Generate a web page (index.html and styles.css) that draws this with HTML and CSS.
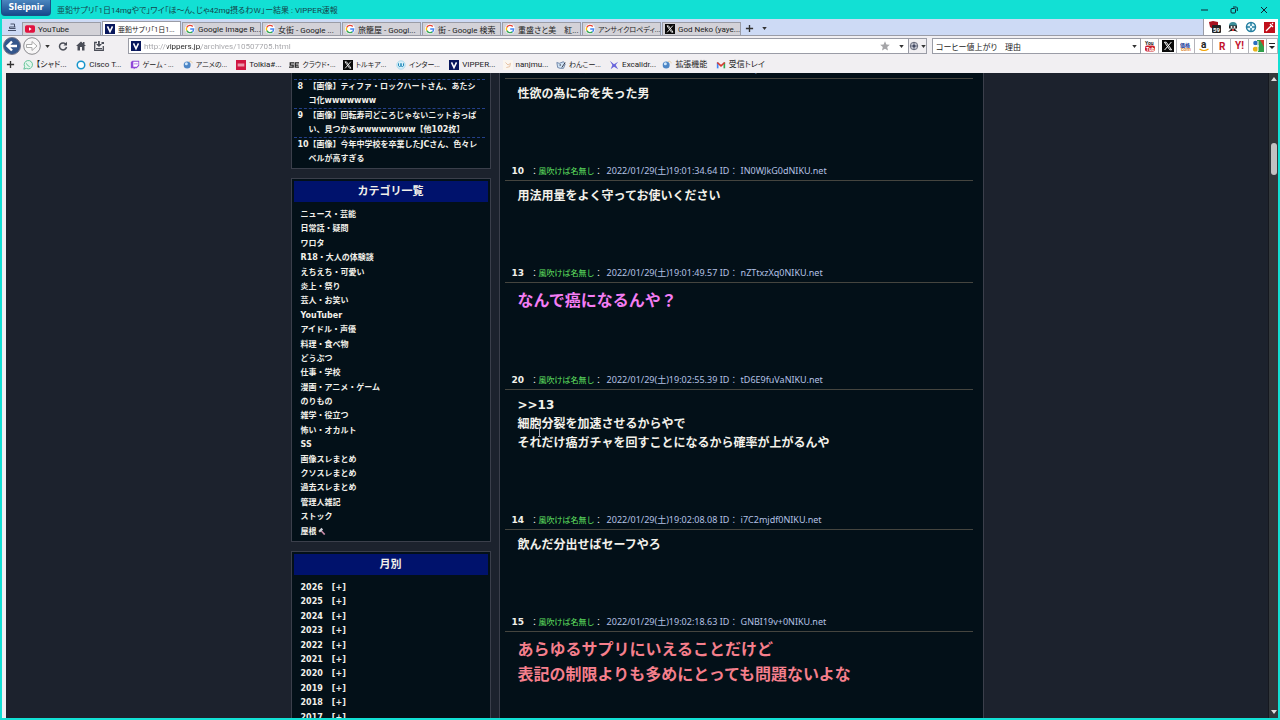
FILE: index.html
```html
<!DOCTYPE html>
<html lang="ja">
<head>
    <meta charset="UTF-8">
    <meta name="viewport" content="width=device-width, initial-scale=1.0">
    <title>亜鉛サプリ「1日14mgやで」 : VIPPER速報</title>
    <link rel="stylesheet" href="styles.css">
</head>
<body>

    <!-- Shared icons -->
    <svg class="sprite" aria-hidden="true">
        <symbol id="google" viewBox="0 0 18 18">
            <circle cx="9" cy="9" r="9" fill="#fff"/>
            <path d="M14 4.6A6.6 6.6 0 0 0 3.2 6" fill="none" stroke="#ea4335" stroke-width="2.4"/>
            <path d="M3.2 6a6.6 6.6 0 0 0 0 6" fill="none" stroke="#fbbc05" stroke-width="2.4"/>
            <path d="M3.2 12a6.6 6.6 0 0 0 10 2.2" fill="none" stroke="#34a853" stroke-width="2.4"/>
            <path d="M13.2 14.2A6.6 6.6 0 0 0 15.6 9H9.4" fill="none" stroke="#4285f4" stroke-width="2.4"/>
        </symbol>
        <symbol id="vip" viewBox="0 0 12 12">
            <path d="M0 0h12v12H0z" fill="#08175c"/>
            <path d="M3 2.8l3 6.4 3-6.4" fill="none" stroke="#fff" stroke-width="1.8"/>
        </symbol>
        <symbol id="x" viewBox="0 0 12 12">
            <path d="M0 0h12v12H0z" fill="#0a0a0a"/>
            <path d="M2.4 2.2h1.8l5.4 7.6H7.8z" fill="none" stroke="#fff"/>
            <path d="M9.4 2L2.6 10" stroke="#fff"/>
        </symbol>
        <symbol id="globe" viewBox="0 0 12 12">
            <circle cx="5" cy="6" r="4.2" fill="#4d86c6"/>
            <circle cx="4" cy="4.6" r="1.8" fill="#cfe6fa"/>
            <path d="M7 2c2-1.500 4 0 4 2" fill="none" stroke="#e6c99a"/>
        </symbol>
        <symbol id="down" viewBox="0 0 6 4">
            <path d="M0 0h6L3 4z" fill="currentColor"/>
        </symbol>
        <symbol id="plus" viewBox="0 0 10 10">
            <path d="M5 1v8M1 5h8" stroke="currentColor" stroke-width="1.500"/>
        </symbol>
    </svg>

    <!-- Title Bar -->
    <header class="titlebar">
        <button class="brand">Sleipnir</button>
        <span class="window-title">亜鉛サプリ「1日14mgやで」ワイ「ほ～ん、じゃ42mg摂るわｗ」ー結果 : VIPPER速報</span>
        <div class="window-buttons">
            <button aria-label="最小化"><svg viewBox="0 0 8 8"><path d="M1 4h7" stroke="#123"/></svg></button>
            <button aria-label="元に戻す"><svg viewBox="0 0 8 8" fill="none" stroke="#123"><rect x="1" y="2.500" width="4.500" height="4.500" rx="1"/><path d="M3 1h3.500l.8.8V5"/></svg></button>
            <button aria-label="閉じる"><svg viewBox="0 0 8 8"><path d="M1 1l6 6M7 1L1 7" stroke="#123"/></svg></button>
        </div>
    </header>

    <div class="window">

        <!-- Tabs -->
        <div class="tabstrip">
            <button class="tab-home" aria-label="タブ一覧"><svg viewBox="0 0 10 10" fill="none" stroke="#46506a"><path d="M3.500 2h4v3M2.500 5h6M1 8.500h8M2.500 5v1.500h6"/></svg></button>
            <nav class="tabs">
                <a class="tab" href="#"><svg class="icon" viewBox="0 0 12 12"><rect y="1.500" width="12" height="9" rx="2" fill="#e2123f"/><path d="M4.800 4v4L8 6z" fill="#fff"/></svg><span>YouTube</span></a>
                <a class="tab active kana" href="#"><svg class="icon"><use href="#vip"/></svg><span>亜鉛サプリ「1日1...</span></a>
                <a class="tab" href="#"><svg class="icon"><use href="#google"/></svg><span>Google Image R...</span></a>
                <a class="tab" href="#"><svg class="icon"><use href="#google"/></svg><span>女街 - Google ...</span></a>
                <a class="tab" href="#"><svg class="icon"><use href="#google"/></svg><span>旅籠屋 - Googl...</span></a>
                <a class="tab" href="#"><svg class="icon"><use href="#google"/></svg><span>街 - Google 検索</span></a>
                <a class="tab" href="#"><svg class="icon"><use href="#google"/></svg><span>重盛さと美　紅...</span></a>
                <a class="tab kana" href="#"><svg class="icon"><use href="#google"/></svg><span>アンサイクロペディ...</span></a>
                <a class="tab" href="#"><svg class="icon"><use href="#x"/></svg><span>God Neko (yaye...</span></a>
            </nav>
            <button class="tab-add" aria-label="新しいタブ"><svg class="small"><use href="#plus"/></svg></button>
            <button class="tab-add" aria-label="タブメニュー"><svg class="caret"><use href="#down"/></svg></button>
            <div class="extensions">
                <svg viewBox="0 0 14 14"><path d="M1 2l4-1 5 1v5L5 9 2 7z" fill="#a8101d"/><rect x="4" y="5" width="9" height="8" rx="1" fill="#222"/><text x="5" y="12" class="badge">59</text></svg>
                <svg viewBox="0 0 14 14"><path d="M3 6a4 4 0 0 1 8 0z" fill="#3b8d98"/><rect x="3" y="5.500" width="8" height="3" fill="#222"/><circle cx="5.500" cy="7" r="1" fill="#fff"/><circle cx="8.500" cy="7" r="1" fill="#fff"/><path d="M2 12l3-3h4l3 3-3-1H5z" fill="#222"/><path d="M6 9h2v2H6z" fill="#d33"/></svg>
                <svg viewBox="0 0 14 14"><circle cx="7" cy="7" r="4.500" fill="#e6f7fb" stroke="#257fa1" stroke-width="1.500"/><path d="M7 3v3M7 8v3M3 7h3M8 7h3" stroke="#257fa1" stroke-width="1.500"/></svg>
                <svg viewBox="0 0 14 14"><path d="M2 2h11v11H2z" fill="#c00f1b"/><path d="M4 11l5-5M8 4l3 3M10 4l1-1" stroke="#fff" stroke-width="1.300"/></svg>
            </div>
        </div>

        <!-- Address Bar -->
        <div class="toolbar">
            <div class="nav-buttons">
                <button aria-label="戻る"><svg class="round" viewBox="0 0 18 18"><circle cx="9" cy="9" r="8.500" fill="#33568c" stroke="#778"/><path d="M14 9H5M9 4.500L4.500 9 9 13.500" fill="none" stroke="#fff" stroke-width="2.400"/></svg></button>
                <button aria-label="進む"><svg class="round" viewBox="0 0 18 18"><circle cx="9" cy="9" r="8.300" fill="#f7f6f7" stroke="#8a8a8e"/><path d="M3.500 7.500H9V4.500L14 9l-5 4.500v-3H3.500z" fill="#fff" stroke="#aaa"/></svg></button>
                <button aria-label="履歴"><svg class="caret"><use href="#down"/></svg></button>
            </div>
            <div class="page-buttons">
                <button aria-label="再読み込み"><svg viewBox="0 0 10 10"><path d="M8 3.500A3.500 3.500 0 1 0 8.500 6" fill="none" stroke="#4a4d57" stroke-width="1.500"/><path d="M9 .8v3.700H5.500z" fill="#4a4d57"/></svg></button>
                <button aria-label="ホーム"><svg viewBox="0 0 10 10"><path d="M5 .5L10 5H8.500v4.500h-2.500V6H4v3.500H1.500V5H0z" fill="#4a4d57"/><path d="M7 1h1.500v2.500H7z" fill="#4a4d57"/></svg></button>
                <button aria-label="保存"><svg viewBox="0 0 10 10"><path d="M3 1.500H.7v7.800h8.600V5" fill="none" stroke="#4a4d57" stroke-width="1.300"/><path d="M4 0h1.800v3H8L5 6 2 3h2z" fill="#4a4d57"/><path d="M7.500 1H10v2H7.500zM2 7h6v1.200H2z" fill="#4a4d57"/></svg></button>
            </div>
            <div class="address">
                <svg class="icon"><use href="#vip"/></svg>
                <input class="url" type="text" aria-label="アドレス" value="http://vippers.jp/archives/10507705.html">
                <button aria-label="お気に入り"><svg class="star" viewBox="0 0 10 10"><path d="M5 .3l1.400 3.200 3.400.3-2.600 2.300.8 3.500L5 7.800 2 9.600l.8-3.500L.2 3.800l3.400-.3z" fill="#a5a5a8"/></svg></button>
                <button aria-label="候補"><svg class="caret"><use href="#down"/></svg></button>
            </div>
            <button class="engine" aria-label="エンジン"><svg class="icon" viewBox="0 0 12 12"><circle cx="6" cy="6" r="4.500" fill="#c9cbd6" stroke="#555a6c"/><path d="M6 1.500v9M1.500 6h9" stroke="#555a6c"/><circle cx="6" cy="6" r="1.800" fill="#444a63"/></svg><svg class="caret"><use href="#down"/></svg></button>
            <div class="search">
                <input type="text" aria-label="検索" value="コーヒー値上がり　理由">
                <button aria-label="検索履歴"><svg class="caret"><use href="#down"/></svg></button>
            </div>
            <div class="engines">
                <button aria-label="YouTube"><svg viewBox="0 0 12 12"><text x="1" y="5" class="logo dark">You</text><rect x="1" y="5.500" width="10" height="6" rx="2" fill="#cc1e2b"/><text x="2" y="10.500" class="logo white">Tub</text></svg></button>
                <button aria-label="X"><svg><use href="#x"/></svg></button>
                <button aria-label="価格.com"><svg viewBox="0 0 12 12"><text x="0" y="7" class="logo blue">価格</text><text x="1" y="11" class="logo orange">com</text></svg></button>
                <button aria-label="Amazon"><svg viewBox="0 0 12 12"><text x="3" y="8" class="letter dark">a</text><path d="M1.500 9q4.500 3 9 0" fill="none" stroke="#f2a100" stroke-width="1.200"/></svg></button>
                <button aria-label="楽天"><svg viewBox="0 0 12 12"><text x="3" y="10" class="letter red">R</text></svg></button>
                <button aria-label="Yahoo"><svg viewBox="0 0 12 12"><text x="1" y="9" class="letter red">Y!</text></svg></button>
                <button aria-label="地図"><svg viewBox="0 0 12 12"><path d="M5 0h7v12H6z" fill="#2f9e4b"/><circle cx="3.500" cy="3" r="2.300" fill="#2a6fc0"/><circle cx="3.500" cy="9" r="2.600" fill="#e8b31a"/><path d="M8 0h4v7z" fill="#d33b2c"/><path d="M1 6h6M6 1v10" stroke="#fff"/></svg></button>
            </div>
            <button class="more" aria-label="その他"><svg viewBox="0 0 6 8"><path d="M0 1.500h6" stroke="#222"/><path d="M0 4h6L3 7z" fill="#222"/></svg></button>
        </div>

        <!-- Bookmarks -->
        <div class="bookmarks">
            <button aria-label="追加"><svg class="small"><use href="#plus"/></svg></button>
            <nav>
                <a href="#"><svg viewBox="0 0 12 12"><path d="M1 11l1-3a5 5 0 1 1 2 2z" fill="#e2f6ec" stroke="#4dbb8a"/><path d="M4 4q1 3 4 4" stroke="#4dbb8a" fill="none"/></svg>【シャド...</a>
                <a href="#"><svg viewBox="0 0 12 12"><circle cx="6" cy="6" r="4.500" fill="#fff" stroke="#1695cc" stroke-width="1.800"/></svg>Cisco T...</a>
                <a class="kana" href="#"><svg viewBox="0 0 12 12"><path d="M1 2.500L3 1h8v6L8 10H6l-1.500 1.500V10H1z" fill="#9147d8"/><path d="M4 2h6v4L8 8H4z" fill="#fff"/><path d="M6 3.500v2M8.300 3.500v2" stroke="#9147d8"/></svg>ゲーム - ...</a>
                <a class="kana" href="#"><svg><use href="#globe"/></svg>アニメの...</a>
                <a href="#"><svg viewBox="0 0 12 12"><path d="M0 0h12v12H0z" fill="#d11642"/><path d="M2 5h8M2 7h8" stroke="#fff"/></svg>Tolkia#...</a>
                <a class="kana" href="#"><svg viewBox="0 0 12 12"><path d="M6 3.500H1.500v2.500H5v2.500H0M12 3.500H7.500v5H12M7.500 6h4" fill="none" stroke="#222" stroke-width="1.500"/></svg>クラウド・...</a>
                <a class="kana" href="#"><svg><use href="#x"/></svg>トルキア...</a>
                <a class="kana" href="#"><svg viewBox="0 0 12 12"><circle cx="6" cy="6" r="5" fill="#d8f0fa" stroke="#a5d6ea"/><path d="M3 4v3q1.500 2 3 0V4v3q1.500 2 3 0V4" fill="none" stroke="#2288b8" stroke-width="1.200"/></svg>インター...</a>
                <a href="#"><svg><use href="#vip"/></svg>VIPPER...</a>
                <a href="#"><svg viewBox="0 0 12 12"><path d="M0 0h12v12H0z" fill="#fbf6ef"/><path d="M3 3l3 3 3-2-1 4-4 1" fill="none" stroke="#e3b998"/></svg>nanjmu...</a>
                <a class="kana" href="#"><svg viewBox="0 0 12 12"><path d="M1 3l3 1 5-2 2 3-2 5H5L2 9z" fill="#cfe1f3" stroke="#6279a0"/><circle cx="5" cy="6" r=".8" fill="#223"/><path d="M7 9l4-6" stroke="#223"/></svg>わんこー...</a>
                <a href="#"><svg viewBox="0 0 12 12"><path d="M1 1l5 4 5-3-3 4 3 5-5-3-4 3 2-5z" fill="#6965db"/></svg>Excalidr...</a>
                <a href="#"><svg><use href="#globe"/></svg>拡張機能</a>
                <a href="#"><svg viewBox="0 0 12 12" fill="none" stroke-width="2"><path d="M2 10V3" stroke="#4285f4"/><path d="M10 10V3" stroke="#34a853"/><path d="M1.500 3L6 7l4.500-4" stroke="#d93a2f"/></svg>受信トレイ</a>
            </nav>
        </div>

        <!-- Web Page -->
        <div class="viewport">
            <div class="page">
                <div class="layout">

                    <aside class="sidebar">
                        <section class="box">
                            <ol class="ranking">
                                <li><b>8</b><a href="#">【画像】ティファ・ロックハートさん、あたシコ化wwwwwww</a></li>
                                <li><b>9</b><a href="#">【画像】回転寿司どころじゃないニットおっぱい、見つかるwwwwwwww【他102枚】</a></li>
                                <li><b>10</b><a href="#">【画像】今年中学校を卒業したJCさん、色々レベルが高すぎる</a></li>
                            </ol>
                        </section>

                        <section class="box">
                            <h2>カテゴリ一覧</h2>
                            <ul class="links">
                                <li><a href="#">ニュース・芸能</a></li>
                                <li><a href="#">日常話・疑問</a></li>
                                <li><a href="#">ワロタ</a></li>
                                <li><a href="#">R18・大人の体験談</a></li>
                                <li><a href="#">えちえち・可愛い</a></li>
                                <li><a href="#">炎上・祭り</a></li>
                                <li><a href="#">芸人・お笑い</a></li>
                                <li><a href="#">YouTuber</a></li>
                                <li><a href="#">アイドル・声優</a></li>
                                <li><a href="#">料理・食べ物</a></li>
                                <li><a href="#">どうぶつ</a></li>
                                <li><a href="#">仕事・学校</a></li>
                                <li><a href="#">漫画・アニメ・ゲーム</a></li>
                                <li><a href="#">のりもの</a></li>
                                <li><a href="#">雑学・役立つ</a></li>
                                <li><a href="#">怖い・オカルト</a></li>
                                <li><a href="#">SS</a></li>
                                <li><a href="#">画像スレまとめ</a></li>
                                <li><a href="#">クソスレまとめ</a></li>
                                <li><a href="#">過去スレまとめ</a></li>
                                <li><a href="#">管理人雑記</a></li>
                                <li><a href="#">ストック</a></li>
                                <li><a href="#">屋根<svg class="hammer" viewBox="0 0 10 10"><path d="M4 4l5 5.500" stroke="#c88aa6" stroke-width="2"/><path d="M1 5l4-4 2 2-4 4z" fill="#cfd0d8"/></svg></a></li>
                            </ul>
                        </section>

                        <section class="box">
                            <h2>月別</h2>
                            <ul class="links months">
                                <li>2026<a href="#">[+]</a></li>
                                <li>2025<a href="#">[+]</a></li>
                                <li>2024<a href="#">[+]</a></li>
                                <li>2023<a href="#">[+]</a></li>
                                <li>2022<a href="#">[+]</a></li>
                                <li>2021<a href="#">[+]</a></li>
                                <li>2020<a href="#">[+]</a></li>
                                <li>2019<a href="#">[+]</a></li>
                                <li>2018<a href="#">[+]</a></li>
                                <li>2017<a href="#">[+]</a></li>
                            </ul>
                        </section>
                    </aside>

                    <main class="thread">
                        <article class="post">
                            <div class="meta"><b>9</b>：<span class="name">風吹けば名無し</span>： <span class="date">2022/01/29(土)19:01:30.12 ID： k8Qw2LxP0NIKU.net</span></div>
                            <p>性欲の為に命を失った男</p>
                        </article>
                        <article class="post">
                            <div class="meta"><b>10</b>：<span class="name">風吹けば名無し</span>： <span class="date">2022/01/29(土)19:01:34.64 ID： IN0WJkG0dNIKU.net</span></div>
                            <p>用法用量をよく守ってお使いください</p>
                        </article>
                        <article class="post">
                            <div class="meta"><b>13</b>：<span class="name">風吹けば名無し</span>： <span class="date">2022/01/29(土)19:01:49.57 ID： nZTtxzXq0NIKU.net</span></div>
                            <p class="big pink">なんで癌になるんや？</p>
                        </article>
                        <article class="post">
                            <div class="meta"><b>20</b>：<span class="name">風吹けば名無し</span>： <span class="date">2022/01/29(土)19:02:55.39 ID： tD6E9fuVaNIKU.net</span></div>
                            <p>&gt;&gt;13<br>細胞分裂を加速させるからやで<br>それだけ癌ガチャを回すことになるから確率が上がるんや</p>
                        </article>
                        <article class="post">
                            <div class="meta"><b>14</b>：<span class="name">風吹けば名無し</span>： <span class="date">2022/01/29(土)19:02:08.08 ID： i7C2mjdf0NIKU.net</span></div>
                            <p>飲んだ分出せばセーフやろ</p>
                        </article>
                        <article class="post">
                            <div class="meta"><b>15</b>：<span class="name">風吹けば名無し</span>： <span class="date">2022/01/29(土)19:02:18.63 ID： GNBI19v+0NIKU.net</span></div>
                            <p class="big red">あらゆるサプリにいえることだけど<br>表記の制限よりも多めにとっても問題ないよな</p>
                        </article>
                    </main>
                </div>
            </div>

            <div class="scrollbar">
                <svg viewBox="0 0 6 4"><path d="M0 4h6L3 0z" fill="#ddd"/></svg>
                <div class="thumb"></div>
                <svg viewBox="0 0 6 4"><path d="M0 0h6L3 4z" fill="#ddd"/></svg>
            </div>

            <svg class="cursor" viewBox="0 0 5 9"><path d="M1 .5h3M1 8.500h3M2.500 1v7" stroke="#aab" fill="none"/></svg>
        </div>
    </div>
</body>
</html>
```

FILE: styles.css
```css
/* Base */
* {
    box-sizing: border-box;
}

body {
    display: flex;
    flex-direction: column;
    height: 100vh;
    margin: 0;
    overflow: hidden;
    background-color: #12e0d4;
    font-family: Roboto, 'Noto Sans CJK JP', sans-serif;
    font-size: 8px;
    color: #222;
}

a {
    color: inherit;
    text-decoration: none;
}

button {
    display: flex;
    align-items: center;
    justify-content: center;
    padding: 0;
    border: none;
    background: none;
    color: #333;
    font: inherit;
}

input {
    flex: 1;
    min-width: 0;
    padding: 0;
    border: none;
    outline: none;
    background: none;
    color: #222;
    font: inherit;
    font-feature-settings: "palt";
}

svg {
    flex: none;
    width: 10px;
    height: 10px;
}

.sprite {
    position: absolute;
    width: 0;
    height: 0;
}

svg.small {
    width: 9px;
    height: 9px;
}

svg.caret {
    width: 5px;
    height: 3px;
}

/* Title Bar */
.titlebar {
    display: flex;
    flex: none;
    align-items: center;
    height: 19px;
    padding-left: 1px;
    font-feature-settings: "palt";
}

.brand {
    align-self: flex-start;
    width: 50px;
    height: 16px;
    margin-right: 6px;
    border: 1px solid #1d4f86;
    border-top: none;
    border-radius: 0 0 4px 4px;
    background: linear-gradient(#4b86bf, #164a8d);
    color: #fff;
    font-family: 'DejaVu Sans', sans-serif;
    font-size: 8px;
    font-weight: bold;
}

.window-title {
    flex: 1;
    color: #14444a;
}

.window-buttons {
    display: flex;
    gap: 22px;
    padding-right: 12px;
}

.window-buttons svg {
    width: 8px;
    height: 8px;
}

/* Browser Window */
.window {
    display: flex;
    flex: 1;
    flex-direction: column;
    min-height: 0;
    margin: 0 2px 2px;
    background-color: #f1eff2;
}

.tabstrip {
    display: flex;
    flex: none;
    height: 17px;
    border-bottom: 1px solid #9a9ca6;
    background-color: #cddaf5;
}

.tab-home {
    width: 20px;
}

.tabs {
    display: flex;
    flex: 0 1 720px;
    align-items: flex-end;
}

.tab {
    display: flex;
    flex: 1;
    align-items: center;
    gap: 3px;
    min-width: 0;
    height: 13px;
    margin-right: 1px;
    padding-left: 2px;
    border: 1px solid #9a9ca6;
    border-bottom: none;
    background-color: #d3d2d8;
    white-space: nowrap;
    font-feature-settings: "palt";
}

.tab.active {
    height: 14px;
    background-color: #fff;
}

/* Labels made mostly of kana */
.kana {
    font-size: 7px;
}

.tab-add {
    width: 15px;
    padding-top: 2px;
}

.extensions {
    display: flex;
    align-items: center;
    gap: 4px;
    margin-left: auto;
    padding: 0 2px 0 4px;
    border-left: 1px solid #9a9ca6;
    background-color: #fff;
}

.extensions svg {
    width: 14px;
    height: 14px;
}

.badge {
    fill: #fff;
    font-size: 6px;
    font-weight: bold;
}

/* Address Bar */
.toolbar {
    display: flex;
    flex: none;
    align-items: center;
    height: 20px;
    padding-left: 1px;
}

.nav-buttons,
.page-buttons,
.engines {
    display: flex;
    align-items: center;
}

.nav-buttons {
    gap: 2px;
    margin-right: 7px;
}

svg.round {
    width: 18px;
    height: 18px;
}

.nav-buttons button:last-child {
    width: 8px;
}

.page-buttons {
    gap: 8px;
    margin-right: 24px;
}

.address,
.search {
    display: flex;
    align-items: center;
    height: 16px;
    border: 1px solid #9a9ca6;
    background-color: #fff;
}

.address {
    flex: 1;
    gap: 3px;
    padding: 0 2px;
}

/* Dark host name between the grey scheme and path */
.url {
    background: linear-gradient(to right, #a2a2a6 23px, #222 23px, #222 57px, #a2a2a6 57px);
    -webkit-background-clip: text;
    background-clip: text;
    color: transparent;
}

.address button:last-child {
    width: 10px;
    margin-left: 3px;
}

.engine {
    gap: 2px;
    width: 18px;
    height: 16px;
    border: 1px solid #9a9ca6;
    border-left: none;
}

.search {
    width: 209px;
    margin-left: 5px;
    padding: 0 3px;
}

.engines button {
    width: 18px;
    height: 16px;
    border: 1px solid #b4b4ba;
    border-left: none;
    background-color: #fff;
}

.engines svg {
    width: 12px;
    height: 12px;
}

.logo {
    font-size: 5px;
    font-weight: bold;
}

.letter {
    font-size: 10px;
    font-weight: bold;
}

.dark {
    fill: #222;
}

.white {
    fill: #fff;
}

.blue {
    fill: #1d3c9c;
}

.orange {
    fill: #e08a3a;
}

.letter.red {
    fill: #c3122c;
}

.more {
    width: 11px;
    height: 16px;
    border: 1px solid #b4b4ba;
    border-left: none;
    background-color: #fff;
}

.more svg {
    width: 6px;
    height: 8px;
}

/* Bookmarks */
.bookmarks {
    display: flex;
    flex: none;
    align-items: center;
    height: 17px;
    padding-left: 4px;
}

.bookmarks nav {
    display: flex;
    flex: 0 1 746px;
    margin-left: 8px;
}

.bookmarks a {
    display: flex;
    flex: 1 0 0;
    align-items: center;
    gap: 3px;
    min-width: 0;
    line-height: 10px;
    white-space: nowrap;
    font-feature-settings: "palt";
}

/* Web Page */
.viewport {
    position: relative;
    display: flex;
    flex: 1;
    min-height: 0;
    margin-left: 4px;
    background-color: #1c222d;
}

.page {
    flex: 1;
    overflow: hidden;
    font-family: 'DejaVu Sans', 'Noto Sans CJK JP', sans-serif;
    color: #f2f0ea;
}

.layout {
    display: grid;
    grid-template-columns: 200px 485px;
    gap: 8px;
    justify-content: center;
}

.sidebar {
    display: flex;
    flex-direction: column;
    gap: 9px;
    font-weight: bold;
}

.box {
    padding: 2px;
    border: 1px solid #3b3f4b;
    background-color: #031018;
}

.box:first-child {
    border-top: none;
}

.ranking {
    margin: 0;
    padding: 4px 3px 0 0;
    list-style: none;
    line-height: 14px;
}

.ranking li {
    display: flex;
    padding: 0 5px 0 4px;
    border-top: 1px dashed #24408a;
}

.ranking b {
    flex: none;
    width: 11px;
}

.box h2 {
    margin: 0;
    background-color: #00126c;
    text-align: center;
    font-size: 11px;
    line-height: 21px;
}

.links {
    margin: 0;
    padding: 6px 7px 0;
    list-style: none;
    line-height: 1.8;
}

.months a {
    margin-left: 9px;
}

svg.hammer {
    width: 9px;
    height: 8px;
    vertical-align: middle;
}

/* Thread */
.thread {
    margin-top: -14px;
    padding: 0 10px 0 5px;
    border: 1px solid #3b3f4b;
    background-color: #031018;
}

.post {
    padding-bottom: 58px;
}

.meta {
    height: 19px;
    padding-left: 7px;
    border-bottom: 1px solid #45453f;
    font-family: 'Noto Sans', 'Noto Sans CJK JP', sans-serif;
    font-size: 8px;
    line-height: 18px;
    white-space: nowrap;
}

.meta b {
    display: inline-block;
    width: 19px;
    font-family: 'DejaVu Sans', sans-serif;
    font-size: 9px;
}

.name {
    color: #62e562;
}

.date {
    margin-left: 2px;
    color: #b4c1e4;
    font-size: 9px;
}

.post p {
    margin: 0;
    padding: 6px 13px 0;
    font-size: 12px;
    font-weight: bold;
    line-height: 19px;
}

.post .big {
    padding-top: 5px;
    font-size: 16px;
    line-height: 25px;
}

.pink {
    color: #f47df4;
}

.red {
    color: #f57f8c;
}

/* Scrollbar */
.scrollbar {
    display: flex;
    flex-direction: column;
    align-items: center;
    width: 10px;
    padding: 4px 0;
    border-left: 1px solid #15181f;
    background-color: #33383b;
}

.scrollbar svg {
    width: 6px;
    height: 4px;
}

.thumb {
    width: 6px;
    height: 5%;
    margin: 62px 0 auto;
    border-radius: 3px;
    background-color: #c2c2c2;
}

.cursor {
    position: absolute;
    top: 355px;
    left: 531px;
    width: 5px;
    height: 9px;
}
```
